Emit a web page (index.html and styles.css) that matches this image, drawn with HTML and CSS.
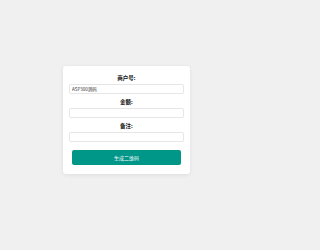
FILE: index.html
```html
<!DOCTYPE html>
<html lang="zh-CN">
<head>
<meta charset="utf-8">
<title>生成二维码</title>
<link rel="stylesheet" href="styles.css">
</head>
<body>
<div class="card">
  <div class="group">
    <label class="label">商户号:</label>
    <input class="input" type="text" value="ASP300测码">
  </div>
  <div class="group">
    <label class="label">金额:</label>
    <input class="input" type="text" value="">
  </div>
  <div class="group">
    <label class="label">备注:</label>
    <input class="input" type="text" value="">
  </div>
  <button class="btn" type="button">生成二维码</button>
</div>
</body>
</html>
```

FILE: styles.css
```css
html, body {
  margin: 0;
  padding: 0;
}
body {
  background: #f0f0f0;
  font-family: "Noto Sans CJK SC", "Liberation Sans", sans-serif;
  padding-top: 66px;
  height: 250px;
  box-sizing: border-box;
}
.card {
  width: 127px;
  margin: 0 auto 0 63px;
  background: #fff;
  border-radius: 3px;
  box-shadow: 0 1px 4px rgba(0, 0, 0, 0.08);
  padding: 9px 6px 9px 6px;
  box-sizing: border-box;
  display: flex;
  flex-direction: column;
}
.group {
  display: flex;
  flex-direction: column;
  margin-bottom: 5px;
}
.label {
  display: block;
  text-align: center;
  font-size: 5.5px;
  line-height: 7px;
  font-weight: bold;
  color: #111;
  margin-bottom: 2px;
}
.input {
  display: block;
  width: 100%;
  height: 10px;
  box-sizing: border-box;
  border: 1px solid #e6e6e6;
  border-radius: 2px;
  background: #fff;
  padding: 0 2px;
  margin: 0;
  font-family: "Noto Sans CJK SC", "Liberation Sans", sans-serif;
  font-size: 4.5px;
  color: #333;
  outline: none;
}
.btn {
  display: block;
  margin: 3px 3px 0 3px;
  height: 15px;
  border: none;
  border-radius: 2px;
  background: #009688;
  color: #fff;
  font-family: "Noto Sans CJK SC", "Liberation Sans", sans-serif;
  font-size: 5px;
  padding: 0;
}
```
